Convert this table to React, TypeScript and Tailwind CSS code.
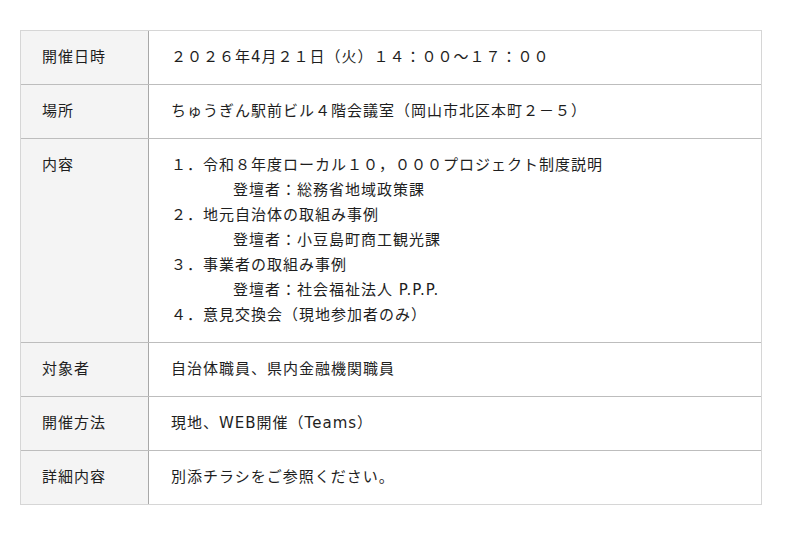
import React from "react";

const rows: { label: string; content: React.ReactNode }[] = [
  { label: "開催日時", content: "２０２６年4月２１日（火）１４：００～１７：００" },
  { label: "場所", content: "ちゅうぎん駅前ビル４階会議室（岡山市北区本町２－５）" },
  {
    label: "内容",
    content: (
      <div>
        <div>１．令和８年度ローカル１０，０００プロジェクト制度説明</div>
        <div className="pl-[62px]">登壇者：総務省地域政策課</div>
        <div>２．地元自治体の取組み事例</div>
        <div className="pl-[62px]">登壇者：小豆島町商工観光課</div>
        <div>３．事業者の取組み事例</div>
        <div className="pl-[62px]">登壇者：社会福祉法人 P.P.P.</div>
        <div>４．意見交換会（現地参加者のみ）</div>
      </div>
    ),
  },
  { label: "対象者", content: "自治体職員、県内金融機関職員" },
  { label: "開催方法", content: "現地、WEB開催（Teams）" },
  { label: "詳細内容", content: "別添チラシをご参照ください。" },
];

export default function App() {
  return (
    <div
      className="w-[800px] h-[535px] bg-white pt-[30px] pl-[20px] text-[15px] leading-[25px] tracking-[1px] text-[#1e1e1e]"
      style={{ fontFamily: '"DejaVu Sans", "Noto Sans CJK JP", sans-serif' }}
    >
      <div className="w-[742px] border border-[#d6d6d6]">
        {rows.map((r, i) => (
          <div
            key={r.label}
            className={`flex ${i > 0 ? "border-t border-[#bdbdbd]" : ""}`}
          >
            <div className="w-[128px] shrink-0 bg-[#f4f4f4] border-r border-[#a8a8a8] pl-[21px] py-[14px]">
              {r.label}
            </div>
            <div className="flex-1 pl-[22px] py-[14px]">{r.content}</div>
          </div>
        ))}
      </div>
    </div>
  );
}
